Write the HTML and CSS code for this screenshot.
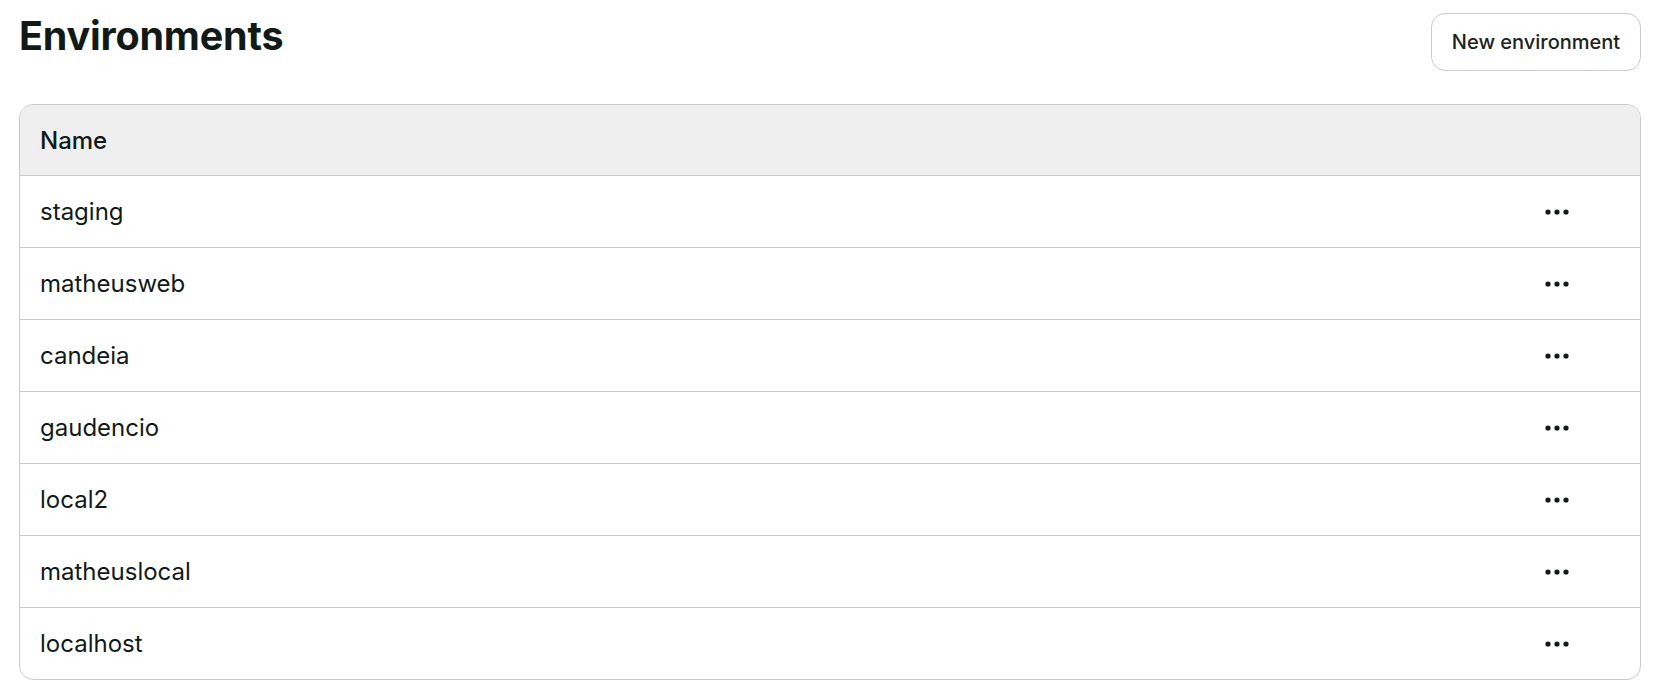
FILE: index.html
```html
<!DOCTYPE html>
<html>
<head>
<meta charset="utf-8">
<link rel="stylesheet" href="styles.css">
</head>
<body>
<div class="page">
  <div class="top">
    <h1 class="title">Environments</h1>
    <button class="btn">New environment</button>
  </div>
  <div class="table">
    <div class="thead">Name</div>
    <div class="row"><span class="name">staging</span><span class="more"><svg width="24" height="6" viewBox="0 0 24 6"><circle cx="3" cy="3" r="2.6"/><circle cx="12" cy="3" r="2.6"/><circle cx="21" cy="3" r="2.6"/></svg></span></div>
    <div class="row"><span class="name">matheusweb</span><span class="more"><svg width="24" height="6" viewBox="0 0 24 6"><circle cx="3" cy="3" r="2.6"/><circle cx="12" cy="3" r="2.6"/><circle cx="21" cy="3" r="2.6"/></svg></span></div>
    <div class="row"><span class="name">candeia</span><span class="more"><svg width="24" height="6" viewBox="0 0 24 6"><circle cx="3" cy="3" r="2.6"/><circle cx="12" cy="3" r="2.6"/><circle cx="21" cy="3" r="2.6"/></svg></span></div>
    <div class="row"><span class="name">gaudencio</span><span class="more"><svg width="24" height="6" viewBox="0 0 24 6"><circle cx="3" cy="3" r="2.6"/><circle cx="12" cy="3" r="2.6"/><circle cx="21" cy="3" r="2.6"/></svg></span></div>
    <div class="row"><span class="name">local2</span><span class="more"><svg width="24" height="6" viewBox="0 0 24 6"><circle cx="3" cy="3" r="2.6"/><circle cx="12" cy="3" r="2.6"/><circle cx="21" cy="3" r="2.6"/></svg></span></div>
    <div class="row"><span class="name">matheuslocal</span><span class="more"><svg width="24" height="6" viewBox="0 0 24 6"><circle cx="3" cy="3" r="2.6"/><circle cx="12" cy="3" r="2.6"/><circle cx="21" cy="3" r="2.6"/></svg></span></div>
    <div class="row"><span class="name">localhost</span><span class="more"><svg width="24" height="6" viewBox="0 0 24 6"><circle cx="3" cy="3" r="2.6"/><circle cx="12" cy="3" r="2.6"/><circle cx="21" cy="3" r="2.6"/></svg></span></div>
  </div>
</div>
</body>
</html>
```
FILE: styles.css
```css
* { box-sizing: border-box; }
html, body { margin: 0; padding: 0; background: #ffffff; }
body {
  font-family: Inter, "Noto Sans", "Liberation Sans", sans-serif;
  color: #121a17;
}
.page {
  padding: 13px 25px 0 19px;
}
.top {
  display: flex;
  justify-content: space-between;
  align-items: flex-start;
  margin-bottom: 33px;
}
.title {
  margin: 0;
  font-size: 39.5px;
  line-height: 46px;
  font-weight: 700;
  letter-spacing: -0.2px;
  color: #121a17;
}
.btn {
  height: 58px;
  width: 210px;
  border: 1px solid #c5cccb;
  border-radius: 14px;
  background: #fff;
  font-family: inherit;
  font-size: 20px;
  font-weight: 500;
  color: #1b2320;
  padding: 0;
}
.table {
  border: 1px solid #c5cccb;
  border-radius: 14px;
  overflow: hidden;
}
.thead {
  height: 71px;
  background: #efefef;
  border-bottom: 1px solid #c5cccb;
  display: flex;
  align-items: center;
  padding-left: 20px;
  font-size: 24px;
  font-weight: 500;
}
.row {
  height: 72px;
  display: flex;
  align-items: center;
  padding-left: 20px;
  border-bottom: 1px solid #c5cccb;
  font-size: 24px;
}
.row:last-child { border-bottom: none; height: 71px; }
.name { flex: 1; }
.more {
  width: 24px;
  margin-right: 71px;
  display: flex;
  align-items: center;
}
.more svg { fill: #121a17; display: block; }
```
